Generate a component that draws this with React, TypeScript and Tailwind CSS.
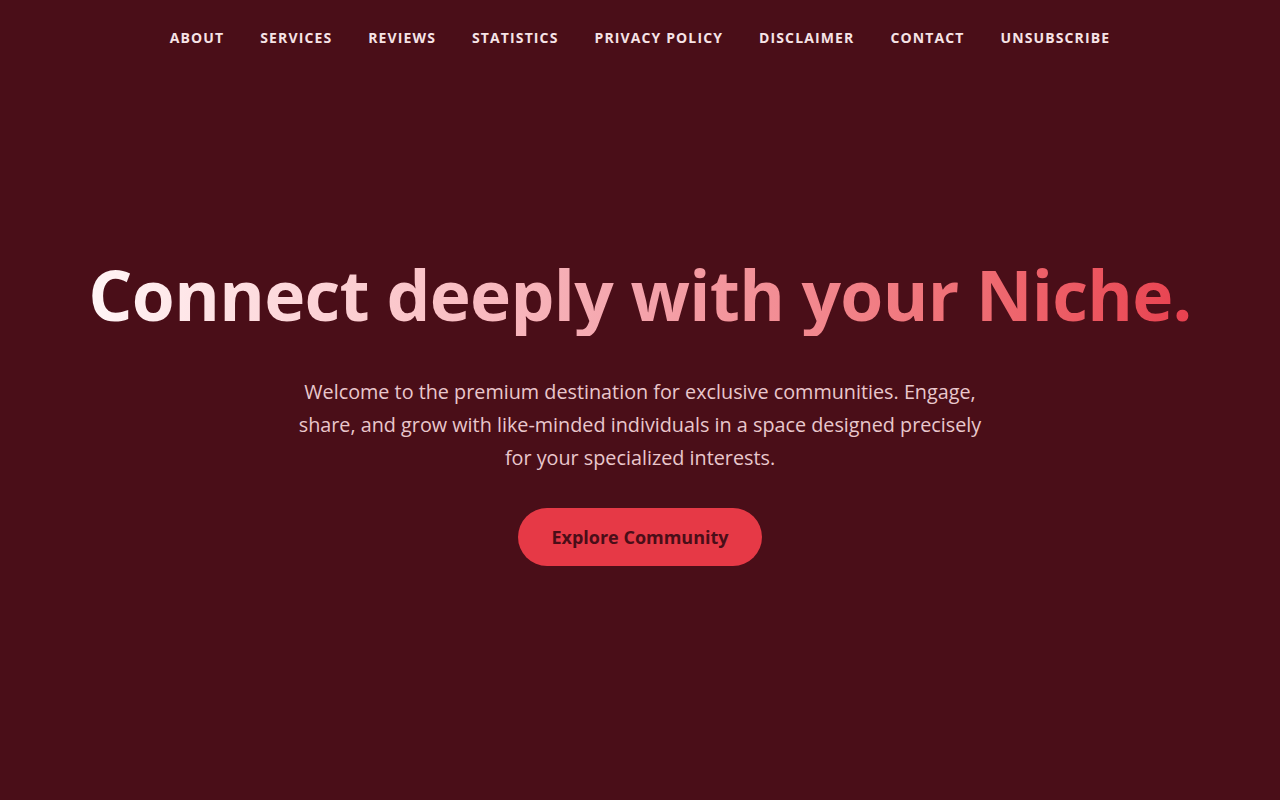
import React from "react";

const links = [
  "About",
  "Services",
  "Reviews",
  "Statistics",
  "Privacy Policy",
  "Disclaimer",
  "Contact",
  "Unsubscribe",
];

export default function App() {
  return (
    <div
      className="flex min-h-screen flex-col bg-[#4a0e18] text-[#fbe4e7]"
      style={{ fontFamily: '"Open Sans", "Noto Sans", sans-serif' }}
    >
      {/* Nav */}
      <nav className="flex h-[74px] items-center justify-center gap-[36px]">
        {links.map((l) => (
          <a
            key={l}
            href="#"
            className="text-[14px] font-bold uppercase tracking-[0.08em] text-[#f6e3e6]"
          >
            {l}
          </a>
        ))}
      </nav>

      {/* Hero */}
      <main className="flex flex-1 flex-col items-center pt-[178px] text-center">
        <h1 className="bg-gradient-to-r from-[#fff5f6] via-[#f4a3ab] to-[#e8404f] bg-clip-text text-[69.5px] font-bold leading-[84px] tracking-[-0.01em] text-transparent">
          Connect deeply with your Niche.
        </h1>
        <p className="mt-[39px] max-w-[700px] text-[19.8px] leading-[33px] text-[#e9c7cc]">
          Welcome to the premium destination for exclusive communities. Engage,
          share, and grow with like-minded individuals in a space designed
          precisely for your specialized interests.
        </p>
        <button className="mt-[34px] h-[58px] rounded-full bg-[#e63946] px-[33px] text-[18px] font-bold text-[#4a0e18]">
          Explore Community
        </button>
      </main>
    </div>
  );
}
